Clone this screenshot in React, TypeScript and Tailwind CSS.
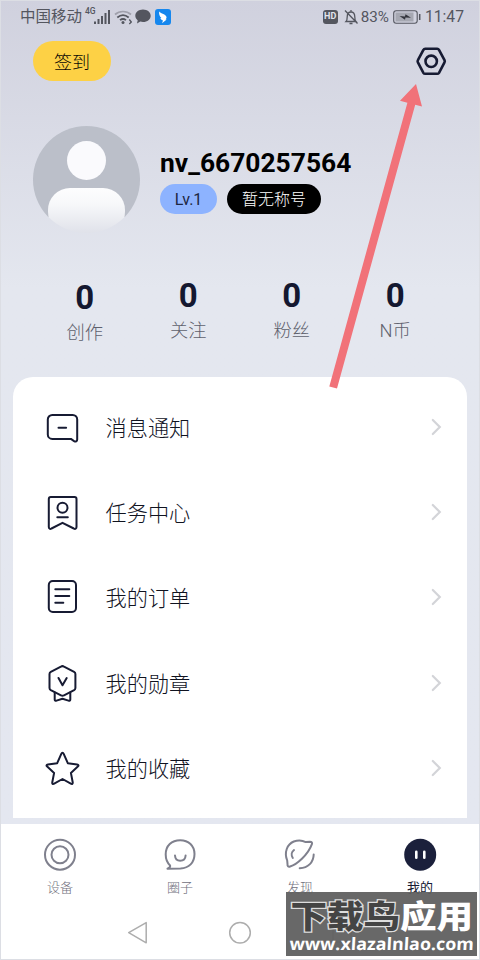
import type { ReactNode } from "react";

const INK = "#171b33";

const STATS = [
  { label: "创作", value: 0, offset: "pt-0.5" },
  { label: "关注", value: 0, offset: "" },
  { label: "粉丝", value: 0, offset: "" },
  { label: "N币", value: 0, offset: "" },
];

function LineIcon({ children }: { children: ReactNode }) {
  return (
    <svg
      className="h-10 w-10 shrink-0"
      viewBox="0 0 40 40"
      fill="none"
      stroke={INK}
      strokeWidth="2"
      strokeLinecap="round"
      strokeLinejoin="round"
    >
      {children}
    </svg>
  );
}

const MENU = [
  {
    label: "消息通知",
    icon: (
      <LineIcon>
        <path d="M10.3 7h20.400a4.500 4.500 0 0 1 4.500 4.500v20c0 1.900-1.600 2.500-3.100 1.600l-3.200-2.200H10.300a4.500 4.500 0 0 1-4.500-4.500V11.500A4.500 4.500 0 0 1 10.300 7z" />
        <path d="M16.500 19.700h7.600" />
      </LineIcon>
    ),
  },
  {
    label: "任务中心",
    icon: (
      <LineIcon>
        <path d="M8.800 4h23.700a2 2 0 0 1 2 2v28c0 1.700-1.300 2.400-2.700 1.500L20.500 29.800 9.500 35.500c-1.400.9-2.700.2-2.700-1.500V6a2 2 0 0 1 2-2z" />
        <circle cx="20.500" cy="14.700" r="5" />
        <path d="M15.300 24.200h10.500" />
      </LineIcon>
    ),
  },
  {
    label: "我的订单",
    icon: (
      <LineIcon>
        <rect x="6.800" y="3" width="27.200" height="31" rx="4" />
        <path d="M13.300 11.300h14M13.300 18h14M13.300 24.700h8" />
      </LineIcon>
    ),
  },
  {
    label: "我的勋章",
    icon: (
      <LineIcon>
        <path d="M18.900 2.600 8.800 7.800c-.9.5-1.300 1.200-1.300 2.100v14.200c0 .9.400 1.600 1.300 2.100l10.200 5.200c1 .5 2 .5 3 0l10.100-5.200c.9-.5 1.300-1.200 1.300-2.100V9.900c0-.9-.4-1.600-1.300-2.100L22 2.600c-1-.6-2.100-.6-3.100 0z" />
        <path d="m16.500 14 4 7.300 4.200-7.300" />
        <path d="M12.700 28.500v7c0 1.100.8 1.500 1.800 1.100l6-1.800 6 1.800c1 .4 1.800 0 1.800-1.100v-7" />
      </LineIcon>
    ),
  },
  {
    label: "我的收藏",
    icon: (
      <LineIcon>
        <path d="m21.700 4.800 4.100 9.400 9.300 1.200c1.500.2 1.800 1.300.7 2.200l-6.900 6.300 1.800 9.400c.3 1.500-.7 2.100-1.900 1.400L20.500 30l-8.300 4.700c-1.300.7-2.200.1-1.900-1.400l1.800-9.400-6.900-6.300c-1.100-1-.8-2 .7-2.200l9.300-1.200 4.100-9.400c.6-1.300 1.800-1.300 2.400 0z" />
      </LineIcon>
    ),
  },
];

function StatusBar() {
  return (
    <div className="flex h-8 items-center justify-between pt-px pr-4 pl-5 text-[#54565f]">
      <div className="flex items-center">
        <span className="w-[62px] pt-px text-[15.500px] leading-8 whitespace-nowrap">中国移动</span>
        <span className="ml-[3px] self-start pt-[7px] text-[8.500px] leading-none font-medium">4G</span>
        <svg className="-ml-[2px] h-4 w-4" viewBox="0 0 16 16" fill="currentColor">
          <path d="M0 12.500h2v2.500H0zM3.500 10h2v5h-2zM7 7h2v8H7zM10.500 4h2v11h-2zM14 1h2v14h-2z" />
        </svg>
        <svg className="ml-1 h-4 w-[18px]" viewBox="0 0 18 16" fill="none" stroke="currentColor" strokeWidth="1.700">
          <path d="M1 5.500c4.600-4 11.400-4 16 0" opacity=".4" />
          <path d="M3.300 8.500c3.500-3 7.900-3 11.400 0M6 11.200c2-1.600 4-1.600 6 0" />
          <circle cx="9" cy="13.500" r="1.500" fill="currentColor" stroke="none" />
          <path d="m15.300 10.500 2 2.500-2 2" strokeWidth="1.300" />
        </svg>
        <svg className="ml-[3px] h-[15px] w-4" viewBox="0 0 16 15" fill="currentColor">
          <path d="M8 .5c4.400 0 7.700 2.800 7.700 6.200S12.400 13 8 13c-1 0-1.900-.1-2.700-.4L2 14.500l.7-3.300C1.200 10.100.3 8.500.3 6.700.3 3.300 3.600.5 8 .5z" />
        </svg>
        <svg className="ml-1 h-4 w-4" viewBox="0 0 16 16">
          <rect width="16" height="16" rx="3" fill="#1687ee" />
          <path d="M4.200 2.500c1.800 2.400 6.600 2.600 7.300 5.500.2 1-.4 1.800-.9 2.600h1.100L7 14.200l1-2.800c-1.600-.5-2.300-1.200-2.600-2.400l1 .1C4.600 7.600 3.700 4.800 4.200 2.500z" fill="#fff" />
        </svg>
      </div>
      <div className="flex items-center">
        <span className="flex h-[14px] w-[15px] items-center justify-center rounded-[3px] bg-[#54565f] text-[9px] font-bold text-[#e2e4ec]">
          HD
        </span>
        <svg className="ml-[6px] h-4 w-[14px]" viewBox="0 0 14 16" fill="none" stroke="currentColor" strokeWidth="1.300">
          <path d="M2 12.500c1-1 1.200-2 1.200-4.500 0-3 1.500-5 3.800-5s3.800 2 3.800 5c0 2.500.2 3.500 1.200 4.500zM7 1v2M5.500 14.500h3M1 1.500l12.500 13" />
        </svg>
        <span className="ml-[3px] text-[15.200px] leading-8">83%</span>
        <svg className="ml-[4px] h-[14px] w-[28px]" viewBox="0 0 28 14" fill="none" stroke="currentColor">
          <rect x=".7" y=".7" width="23.500" height="12.600" rx="2.500" strokeWidth="1.100" />
          <rect x="2.500" y="2.500" width="18" height="9" fill="#a6a8b2" stroke="none" />
          <path d="m6.500 6 5.500.4.500-2.200 5.500 3.600-5.500-.3-.5 2.300z" fill="#32343c" stroke="none" />
          <path d="M26.700 4v6" strokeWidth="1.500" />
        </svg>
        <span className="ml-[4px] text-[15.700px] leading-8">11:47</span>
      </div>
    </div>
  );
}

function Avatar() {
  return (
    <svg className="h-[107px] w-[107px] shrink-0" viewBox="0 0 107 107">
      <defs>
        <linearGradient id="body" x1="0" y1="0" x2="0" y2="1">
          <stop offset="0" stopColor="#fdfdfe" />
          <stop offset=".35" stopColor="#f7f8fa" />
          <stop offset="1" stopColor="#dfe1e9" />
        </linearGradient>
        <clipPath id="round">
          <circle cx="53.500" cy="53.500" r="53.500" />
        </clipPath>
      </defs>
      <path d="M15 90.700A53.500 53.500 0 1 1 92 90.700z" fill="#bbbfc9" />
      <circle cx="53.500" cy="34.500" r="19.500" fill="#fafafd" />
      <rect x="15" y="62" width="77" height="46" rx="22" fill="url(#body)" clipPath="url(#round)" />
    </svg>
  );
}

function Profile() {
  return (
    <div className="flex pt-[45px] pl-[33px]">
      <Avatar />
      <div className="ml-5 pt-[22px]">
        <h1 className="text-[26.400px] leading-[30px] font-bold text-black">nv_6670257564</h1>
        <div className="mt-[6px] flex gap-[10px]">
          <span className="flex h-[30px] w-[57px] items-center justify-center rounded-full bg-[#8db3ff] pt-0.5 text-[16px] text-[#1d2742]">
            Lv.1
          </span>
          <span className="flex h-[30px] w-[94px] items-center justify-center rounded-full bg-black pt-0.5 text-[16px] font-light text-white">
            暂无称号
          </span>
        </div>
      </div>
    </div>
  );
}

function TabBar() {
  return (
    <nav className="grid h-[78px] grid-cols-4 pt-3 text-[13px] font-light text-[#6f707c]">
      <div className="flex flex-col items-center">
        <svg className="h-9 w-9" viewBox="0 0 36 36" fill="none" stroke="#7f808d" strokeWidth="2">
          <circle cx="18" cy="18.700" r="15" />
          <circle cx="18" cy="18.700" r="8.500" />
        </svg>
        <span className="mt-[6px] leading-5">设备</span>
      </div>
      <div className="flex flex-col items-center">
        <svg className="h-9 w-9" viewBox="0 0 36 36" fill="none" stroke="#7f808d" strokeWidth="2" strokeLinecap="round" strokeLinejoin="round">
          <path d="M5.500 32.700c2-.9 3-1.900 2.600-3.200C5.200 26.700 3.700 23 3.700 18.500 3.700 9.800 9.600 4.200 18.200 4.200 26.600 4.200 32.500 9.800 32.500 18c0 8.800-5.600 14-14 14.400z" />
          <path d="M13 19.500c.2 3.300 2 5.300 5.200 5.300s5.200-2 5.400-5.300" />
        </svg>
        <span className="mt-[6px] leading-5">圈子</span>
      </div>
      <div className="flex flex-col items-center">
        <svg className="h-9 w-9" viewBox="0 0 36 36" fill="none" stroke="#7f808d" strokeWidth="2" strokeLinecap="round" strokeLinejoin="round">
          <path d="M5.200 24.500C2 16.500 5 8.200 11.800 5.500c4.200-1.600 8.200-1.500 12 .6l4.200-.3c1.700 0 2.500.8 1.900 2.400-1.900 5.300-5.400 10.200-10 14.600-3.900 3.800-7.800 6.600-11.800 7.700-1.900.5-2.800-.4-2.600-2.300z" />
          <path d="M12 14c-2.600 2-3 5.300-1.200 8M31.700 18.500c-.2 7.700-5.400 13.300-14 13.700" />
        </svg>
        <span className="mt-[6px] leading-5">发现</span>
      </div>
      <div className="flex flex-col items-center">
        <svg className="h-9 w-9" viewBox="0 0 36 36" fill="none" stroke="#fff" strokeWidth="2.600" strokeLinecap="round">
          <circle cx="18.200" cy="18.700" r="16" fill="#1b203b" stroke="none" />
          <path d="M14.300 15.700v6M22.300 15.700v6" />
        </svg>
        <span className="mt-[6px] leading-5 font-normal text-[#171b33]">我的</span>
      </div>
    </nav>
  );
}

// Android back / home / recents keys
function NavKeys() {
  return (
    <div className="flex h-[58px] items-center justify-center gap-[78px] pt-[4px] text-[#adadad]">
      <svg className="h-6 w-6" viewBox="0 0 24 24" fill="none" stroke="currentColor" strokeWidth="1.500" strokeLinejoin="round">
        <path d="M20.200 1.600v20.200L2.700 11.700z" />
      </svg>
      <svg className="h-6 w-6" viewBox="0 0 24 24" fill="none" stroke="currentColor" strokeWidth="1.500">
        <circle cx="12" cy="11.800" r="10.300" />
      </svg>
      <svg className="h-6 w-6" viewBox="0 0 24 24" fill="none" stroke="currentColor" strokeWidth="1.500">
        <rect x="3" y="3" width="18" height="18" rx="1" />
      </svg>
    </div>
  );
}

export default function App() {
  return (
    <div className="relative flex h-[960px] w-[480px] flex-col overflow-hidden bg-white font-[Roboto,'Noto_Sans_CJK_SC',sans-serif] outline -outline-offset-1 outline-[#dcdee4]">
      <div className="flex h-[824px] flex-col bg-linear-to-b from-[#d0d1de] via-[#e4e7ef] via-35% to-[#e4e7f0]">
        <StatusBar />
        <div className="flex items-center justify-between pt-[9px] pr-[33px] pl-[33px]">
          <button className="h-10 w-[78px] rounded-full bg-[#fdd145] pt-0.5 text-[18px] font-light text-[#0c0a04]">签到</button>
          <svg className="h-8 w-8" viewBox="0 0 32 32" fill="none" stroke={INK} strokeWidth="2.600" strokeLinejoin="round">
            <path d="M10.200 3.800h12c.8 0 1.400.3 1.800 1l5.500 10.300c.4.8.4 1.500 0 2.200L24 27.800c-.4.700-1 1-1.800 1h-12c-.8 0-1.400-.3-1.800-1L2.900 17.400c-.4-.8-.4-1.500 0-2.200L8.400 4.800c.4-.7 1-1 1.800-1z" />
            <circle cx="16.200" cy="16.300" r="5.700" />
          </svg>
        </div>

        <Profile />

        <div className="mt-[45px] grid grid-cols-4 px-[33px]">
          {STATS.map((s) => (
            <div key={s.label} className={`flex flex-col items-center ${s.offset}`}>
              <span className="text-[33px] leading-9 font-bold text-[#141830]">{s.value}</span>
              <span className="mt-1 text-[18.300px] leading-[26px] font-light text-[#5f616d]">{s.label}</span>
            </div>
          ))}
        </div>

        <div className="mx-[13px] mt-auto mb-[6px] h-[441px] rounded-t-[20px] bg-white pt-2">
          {MENU.map((item) => (
            <div key={item.label} className="flex h-[85.300px] items-center pr-6 pl-[29px]">
              {item.icon}
              <span className="ml-[23.500px] flex-1 pt-0.5 text-[21.200px] font-light text-[#10131f]">{item.label}</span>
              <svg className="mb-0.5 h-5 w-3" viewBox="0 0 12 20" fill="none" stroke="#d3d4d8" strokeWidth="2.200" strokeLinecap="round">
                <path d="m1.800 3 7 7-7 7" />
              </svg>
            </div>
          ))}
        </div>
      </div>

      <TabBar />
      <NavKeys />

      {/* pointer to the settings button */}
      <svg className="pointer-events-none absolute top-0 left-0 h-[400px] w-[480px]" viewBox="0 0 480 400">
        <path d="M416 84 422 106.500 415.200 104.800 337 388.500 329.300 386.500 407.400 102.700 400 100.700z" fill="#f17279" />
      </svg>

      <div className="absolute top-[892px] left-[286px] flex h-[64px] w-[191px] flex-col items-center justify-end bg-[#606060]/95 pb-[3px] leading-none">
        <div className="origin-center scale-x-[1.16] text-[31.500px] leading-[34px] font-black whitespace-nowrap">
          <span className="text-[#444] [-webkit-text-stroke:2.500px_#ddd] [paint-order:stroke_fill]">下载鸟</span>
          <span className="text-white">应用</span>
        </div>
        <div className="scale-x-105 -skew-x-3 font-['Open_Sans',sans-serif] text-[17px] leading-[18px] font-bold text-white">
          www.xlazalnlao.com
        </div>
      </div>
    </div>
  );
}
